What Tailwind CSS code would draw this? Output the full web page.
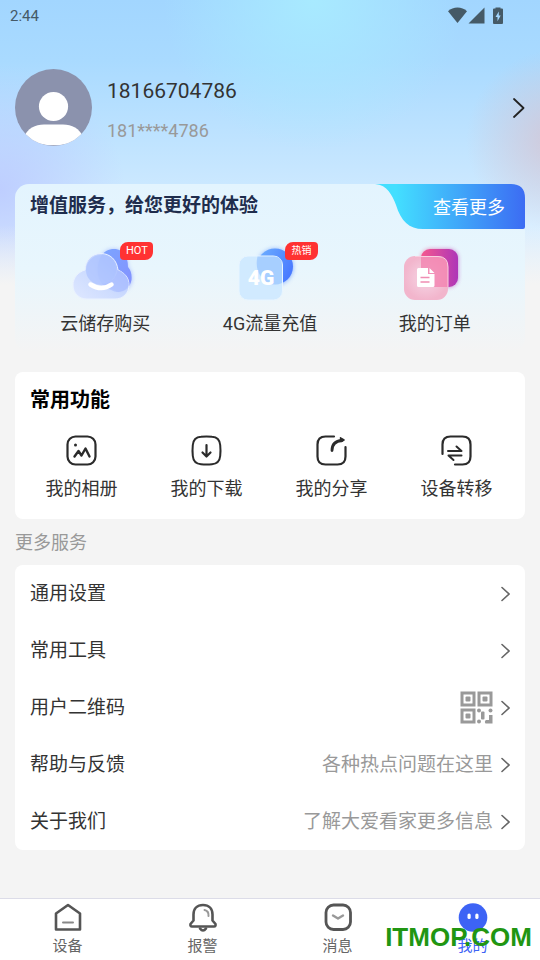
<!DOCTYPE html>
<html lang="zh-CN">
<head>
<meta charset="utf-8">
<meta name="viewport" content="width=device-width, initial-scale=1">
<title>我的</title>
<script src="https://cdn.jsdelivr.net/npm/@tailwindcss/browser@4"></script>
</head>
<body class="bg-[#f4f4f4] font-[Roboto,'Noto_Sans_CJK_SC',sans-serif] text-[#333333]">
<div class="relative isolate flex min-h-screen flex-col">
  <div class="absolute inset-x-0 top-0 -z-10 h-[290px] bg-[linear-gradient(180deg,#f4f4f400_0px,#f4f4f400_225px,#f4f4f4_285px),radial-gradient(circle_at_58%_0px,#a8eaff_0px,#a8eaff00_150px),radial-gradient(circle_at_103%_140px,#d6c2d0cc_0px,#d6c2d000_90px),radial-gradient(circle_at_0%_190px,#bccaffdd_0px,#bccaff00_125px),linear-gradient(180deg,#a2d6ff_0px,#a9daff_60px,#cbe8ff_185px,#d9eeff_225px,#e2f1fd_290px)]"></div>

  <!-- Status bar -->
  <div class="flex h-8 items-center justify-between pr-[35px] pl-[10px] text-[#455a67]">
    <span class="text-[15px]">2:44</span>
    <svg class="h-[18px] w-[58px]" viewBox="0 0 58 18" fill="currentColor" aria-hidden="true">
      <path d="M1 4.200C3.600 1.800 7 .600 10.500 .600S17.400 1.800 20 4.200L10.500 16Z"/>
      <path d="M21.500 16.500 37.500 .600V16.500Z"/>
      <path fill-rule="evenodd" d="M48.500 1.500V.500h5v1H55q1 0 1 1V16q0 1-1 1h-8q-1 0-1-1V2.500q0-1 1-1ZM51.800 4.500 48.500 10h2v4.200L53.700 8.600H51.800Z"/>
    </svg>
  </div>

  <!-- Profile -->
  <header class="mt-[37px] px-[15px]">
    <a href="#profile" class="flex items-center">
      <svg class="size-[77px] shrink-0" viewBox="0 0 77 77" role="img" aria-label="头像">
        <defs><clipPath id="av"><circle cx="38.500" cy="38.500" r="38.500"/></clipPath></defs>
        <circle cx="38.500" cy="38.500" r="38.500" fill="#8b92ad"/>
        <g clip-path="url(#av)" fill="#fff"><circle cx="38.500" cy="37.500" r="14.600"/><path d="M8 69C13 59 20 55.500 29 55.500H48C57 55.500 64 59 69 69C60 74 50 76.300 38.500 76.300S17 74 8 69Z"/></g>
      </svg>
      <div class="ml-[15px] flex flex-1 flex-col gap-[14px] pt-1">
        <span class="text-[21px] leading-7">18166704786</span>
        <span class="text-[18px] leading-6 text-[#999999]">181****4786</span>
      </div>
      <svg class="h-5 w-3" viewBox="0 0 12 20" fill="none" stroke="#222" stroke-width="1.800" stroke-linecap="round" stroke-linejoin="round" aria-hidden="true"><path d="M1 1 10.500 10 1 19"/></svg>
    </a>
  </header>

  <main class="px-[15px]">
    <!-- Value-added services -->
    <section class="mt-[38px] h-[168px] rounded-[14px] bg-linear-to-b from-[#e3f4fe] via-[#e8f6fd] to-[#f4f4f4]">
      <div class="flex items-start justify-between">
        <h2 class="pt-[8px] pl-[15px] text-[19px] leading-7 font-bold text-[#1f2d4d]">增值服务，给您更好的体验</h2>
        <a href="#more" class="relative isolate flex h-[45px] w-[150px] items-center justify-end pt-[2px] pr-5 text-[18px] text-white">
          <svg class="absolute inset-0 -z-10 size-full" viewBox="0 0 150 45" aria-hidden="true">
            <defs><linearGradient id="mg"><stop offset=".15" stop-color="#43dfff"/><stop offset="1" stop-color="#3c6cf3"/></linearGradient></defs>
            <path fill="url(#mg)" d="M-2 0C12 0 17 11 21 21C26 37 34 45 48 45H148Q150 45 150 43V14Q150 0 136 0Z"/>
          </svg>查看更多</a>
      </div>
      <div class="mt-[13px] grid grid-cols-3 px-[8px] text-[18px] leading-6">
        <a href="#cloud" class="flex flex-col items-center gap-[10px]">
          <span class="relative">
            <svg class="h-[60px] w-[90px]" viewBox="0 0 90 60" aria-hidden="true">
              <defs>
                <linearGradient id="c1" x1="0" y1="0" x2="1" y2="1"><stop stop-color="#7ba6ff"/><stop offset="1" stop-color="#8490ff"/></linearGradient>
                <linearGradient id="c2" x1="1" y1="0" x2="0" y2="1"><stop stop-color="#adc4ff" stop-opacity=".75"/><stop offset="1" stop-color="#dfe8ff"/></linearGradient>
                <filter id="b1" x="-30%" y="-30%" width="160%" height="160%"><feGaussianBlur stdDeviation="2"/></filter>
              </defs>
              <path d="M42 42C36 34 37 23 40 16C43 10 48 7 54 7C62 7 68 13 68 25C71 28 72.500 33 72 38C71 45 66 50 58 50Z" fill="#7f98ff" opacity=".55" filter="url(#b1)"/>
              <path d="M42 42C36 34 37 23 40 16C43 10 48 7 54 7C62 7 68 13 68 25C71 28 72 33 71.500 38C70 45 66 50 58 50Z" fill="url(#c1)"/>
              <path d="M27 57C19 57 13 51 13 43C13 36 18 30 25 28C25 18 32 11.500 41 11.500C50 11.500 57 18 58 28C65 31 69 36 69 43C69 51 63 57 55 57Z" fill="url(#c2)" stroke="#eaf2ff" stroke-width="1"/>
              <circle cx="41" cy="28" r="15" fill="#a9c0ff" opacity=".65"/>
              <path d="M58 28C65 31 69 36 69 43C66 48 62 50 57 50C50 49 45 44 42 42C50 42 56 36 58 28Z" fill="#a9bcff" opacity=".6"/>
              <path d="M30.500 42.500Q41.500 49.500 51.500 42.500" fill="none" stroke="#fff" stroke-width="4.500" stroke-linecap="round"/>
            </svg>
            <span class="absolute top-0 left-[60px] flex h-[18px] w-[33px] items-center justify-center rounded-[8px_4px_8px_4px] bg-[#ff3232] text-[11px] text-white">HOT</span>
          </span>
          云储存购买
        </a>
        <a href="#traffic" class="flex flex-col items-center gap-[10px]">
          <span class="relative">
            <svg class="h-[60px] w-[90px]" viewBox="0 0 90 60" aria-hidden="true">
              <defs><linearGradient id="g1" x1="0" y1="0" x2="1" y2=".5"><stop stop-color="#6fb2ff"/><stop offset="1" stop-color="#4a7bff"/></linearGradient></defs>
              <circle cx="50" cy="25" r="18.500" fill="#5c90ff" opacity=".6" filter="url(#b1)"/>
              <circle cx="50" cy="24.500" r="18" fill="url(#g1)"/>
              <rect x="14" y="14" width="43.500" height="44" rx="9" fill="#cfe9ff" fill-opacity=".96" stroke="#e8f5ff"/>
              <path d="M32.500 14.500H49Q57 14.500 57 23V41Q48 45 40 39Q29 29 32.500 14.500Z" fill="#8fc0ff" opacity=".6"/>
              <text x="36" y="43" text-anchor="middle" font-family="Roboto" font-size="21" font-weight="900" fill="#fff">4G</text>
            </svg>
            <span class="absolute top-0 left-[60px] flex h-[18px] w-[33px] items-center justify-center rounded-[8px_4px_8px_4px] bg-[#ff3232] text-[10px] text-white">热销</span>
          </span>
          4G流量充值
        </a>
        <a href="#orders" class="flex flex-col items-center gap-[10px]">
          <svg class="h-[60px] w-[90px]" viewBox="0 0 90 60" aria-hidden="true">
            <defs><linearGradient id="o1"><stop stop-color="#f5588e"/><stop offset="1" stop-color="#ae35b8"/></linearGradient>
            <radialGradient id="o2"><stop offset=".5" stop-color="#f4c6d9"/><stop offset="1" stop-color="#f2b5cc"/></radialGradient></defs>
            <rect x="31" y="7" width="37" height="38" rx="9" fill="url(#o1)" opacity=".65" filter="url(#b1)"/>
            <rect x="31" y="7" width="37" height="38" rx="9" fill="url(#o1)"/>
            <rect x="14" y="14" width="44" height="44" rx="11" fill="url(#o2)"/>
            <path d="M31 14.500H48Q58 14.500 58 25V45H40Q31 45 31 36Z" fill="#f37fad" opacity=".75"/>
            <path d="M25 14.500H48Q58 14.500 58 25V45" fill="none" stroke="#f9cfe0"/>
            <path d="M28.500 26H38V32H44.500V43.500Q44.500 45 43 45H28.500Q27 45 27 43.500V27.500Q27 26 28.500 26ZM39.500 26 44.500 31H39.500Z" fill="#fff"/>
            <path d="M30.500 35.500H39.500M30.500 40H39.500" stroke="#ef8db3" stroke-width="1.500"/>
          </svg>
          我的订单
        </a>
      </div>
    </section>

    <!-- Common functions -->
    <section class="mt-5 rounded-[8px] bg-white pb-4">
      <h2 class="pt-[13px] pl-[15px] text-[20px] leading-[30px] font-bold text-black">常用功能</h2>
      <div class="mt-5 grid grid-cols-4 pr-[6px] pl-1 text-[18px] leading-7">
        <a href="#album" class="flex flex-col items-center gap-[9px]">
          <svg class="size-[31px]" viewBox="0 0 31 31" fill="none" stroke="#2b2b2b" stroke-width="2.200" stroke-linecap="round" stroke-linejoin="round" aria-hidden="true"><rect x="1.500" y="1.500" width="28" height="28" rx="8"/><path d="M8.500 21.500 12.500 16 15.500 20.500 19.500 13.500 23.500 21.500" stroke-width="2.400"/><circle cx="9.500" cy="10" r="1.500" fill="#2b2b2b" stroke="none"/></svg>
          我的相册
        </a>
        <a href="#downloads" class="flex flex-col items-center gap-[9px]">
          <svg class="size-[31px]" viewBox="0 0 31 31" fill="none" stroke="#2b2b2b" stroke-width="2" stroke-linecap="round" stroke-linejoin="round" aria-hidden="true"><path d="M10 1.800Q15.500 1.200 21 1.800 28.500 2.300 29.200 10 29.800 15.500 29.200 21 28.500 28.700 21 29.200 15.500 29.800 10 29.200 2.500 28.700 1.800 21 1.200 15.500 1.800 10 2.500 2.300 10 1.800Z"/><path d="M15.500 10V21M11.500 17.500 15.500 21.500 19.500 17.500" stroke-width="2.200"/></svg>
          我的下载
        </a>
        <a href="#share" class="flex flex-col items-center gap-[9px]">
          <svg class="size-[31px]" viewBox="0 0 31 31" fill="none" stroke="#2b2b2b" stroke-width="2.200" stroke-linecap="round" stroke-linejoin="round" aria-hidden="true"><path d="M18 1.500H9.500Q1.500 1.500 1.500 9.500V21.500Q1.500 29.500 9.500 29.500H21.500Q29.500 29.500 29.500 21.500V12"/><path d="M16 15.500C16 9.500 19.500 6 26 5.500" stroke-width="2.800"/><path d="M24.500 2.800 28 5 25 6.500Z" fill="#2b2b2b" stroke-width="1.500"/></svg>
          我的分享
        </a>
        <a href="#transfer" class="flex flex-col items-center gap-[9px]">
          <svg class="size-[31px]" viewBox="0 0 31 31" fill="none" stroke="#2b2b2b" stroke-width="2.200" stroke-linecap="round" stroke-linejoin="round" aria-hidden="true"><path d="M1.500 19V9.500Q1.500 1.500 9.500 1.500H21.500Q29.500 1.500 29.500 9.500V21.500Q29.500 29.500 21.500 29.500H14"/><path d="M7 16H20.500L15.500 11.500M20.500 20.500H7.500L12.500 25" stroke-width="2"/></svg>
          设备转移
        </a>
      </div>
    </section>

    <!-- More services -->
    <h2 class="mt-[10px] text-[18px] leading-7 text-[#999999]">更多服务</h2>
    <nav aria-label="更多服务" class="mt-[8px] rounded-[8px] bg-white px-[15px] text-[19px] leading-7">
      <a href="#settings" class="flex h-[57px] items-center justify-between">通用设置
        <svg class="h-4 w-[10px]" viewBox="0 0 10 16" fill="none" stroke="#666" stroke-width="1.600" stroke-linecap="round" aria-hidden="true"><path d="M2 1.500 9 8 2 14.500"/></svg></a>
      <a href="#tools" class="flex h-[57px] items-center justify-between">常用工具
        <svg class="h-4 w-[10px]" viewBox="0 0 10 16" fill="none" stroke="#666" stroke-width="1.600" stroke-linecap="round" aria-hidden="true"><path d="M2 1.500 9 8 2 14.500"/></svg></a>
      <a href="#qr" class="flex h-[57px] items-center justify-between">用户二维码
        <span class="flex items-center gap-[7px]">
          <svg class="size-[33px]" viewBox="0 0 33 33" fill="#999" aria-hidden="true">
            <g fill="none" stroke="#999" stroke-width="3"><rect x="2" y="2" width="12" height="12"/><rect x="19" y="2" width="12" height="12"/><rect x="2" y="19" width="12" height="12"/></g>
            <rect x="5.500" y="5.500" width="5" height="5" rx="1"/><rect x="22.500" y="5.500" width="5" height="5" rx="1"/><rect x="5.500" y="22.500" width="5" height="5" rx="1"/>
            <circle cx="19" cy="19.500" r="2"/><circle cx="30.500" cy="19.500" r="2"/><circle cx="19" cy="30.500" r="2"/><rect x="21" y="20.500" width="3.500" height="8" rx="1"/><path d="M29 24H32.500V32.500H25.500Q24 30.500 26 29H29Z"/>
          </svg>
          <svg class="h-4 w-[10px]" viewBox="0 0 10 16" fill="none" stroke="#666" stroke-width="1.600" stroke-linecap="round" aria-hidden="true"><path d="M2 1.500 9 8 2 14.500"/></svg>
        </span></a>
      <a href="#help" class="flex h-[57px] items-center justify-between">帮助与反馈
        <span class="flex items-center gap-[7px] text-[#999999]">各种热点问题在这里
          <svg class="h-4 w-[10px]" viewBox="0 0 10 16" fill="none" stroke="#666" stroke-width="1.600" stroke-linecap="round" aria-hidden="true"><path d="M2 1.500 9 8 2 14.500"/></svg></span></a>
      <a href="#about" class="flex h-[57px] items-center justify-between">关于我们
        <span class="flex items-center gap-[7px] text-[#999999]">了解大爱看家更多信息
          <svg class="h-4 w-[10px]" viewBox="0 0 10 16" fill="none" stroke="#666" stroke-width="1.600" stroke-linecap="round" aria-hidden="true"><path d="M2 1.500 9 8 2 14.500"/></svg></span></a>
    </nav>
  </main>

  <!-- Tab bar -->
  <footer class="relative mt-auto">
    <nav aria-label="主导航" class="grid h-[62px] grid-cols-4 border-t border-[#dcdce8] bg-white pt-[4px] text-[15px] leading-[22px] text-[#666666]">
      <a href="#devices" class="flex flex-col items-center gap-[2px]">
        <svg class="size-[30px]" viewBox="0 0 30 30" fill="none" stroke="#555" stroke-width="2.600" stroke-linejoin="round" stroke-linecap="round" aria-hidden="true"><path d="M3 10.500 15 2 27 10.500V26.500H3Z"/><path d="M10 19.500H20" stroke="#888" stroke-width="2"/></svg>设备</a>
      <a href="#alerts" class="flex flex-col items-center gap-[2px]">
        <svg class="size-[30px]" viewBox="0 0 30 30" fill="none" stroke="#555" stroke-width="2.600" stroke-linejoin="round" stroke-linecap="round" aria-hidden="true"><path d="M15 2C9 2 5.500 6 5.500 11.500V17.500L2.500 21Q2 23.500 4 23.500H26Q28 23.500 27.500 21L24.500 17.500V11.500C24.500 6 21 2 15 2Z"/><path d="M12 25.500Q15 29.500 18 25.500"/><path d="M16.500 7Q21 8 20.500 13" stroke="#999" stroke-width="2"/></svg>报警</a>
      <a href="#messages" class="flex flex-col items-center gap-[2px]">
        <svg class="size-[30px]" viewBox="0 0 30 30" fill="none" stroke="#555" stroke-width="2.800" stroke-linejoin="round" stroke-linecap="round" aria-hidden="true"><rect x="3" y="2" width="24.500" height="24.500" rx="7.500"/><path d="M10 12.500 15 15.500 20 12.500" stroke="#999" stroke-width="2.400"/></svg>消息</a>
      <a href="#me" aria-current="page" class="flex flex-col items-center gap-[2px] text-[#3d63f5]">
        <svg class="size-[30px]" viewBox="0 0 30 30" aria-hidden="true"><circle cx="15" cy="14.500" r="14.300" fill="#3d63f5"/><rect x="9.500" y="10.500" width="3.200" height="5.500" rx="1.600" fill="#fff"/><rect x="17.300" y="10.500" width="3.200" height="5.500" rx="1.600" fill="#fff"/></svg>我的</a>
    </nav>
    <span class="pointer-events-none absolute right-[8px] bottom-[5px] font-['Liberation_Sans',sans-serif] text-[26px] leading-9 font-bold text-[#219612]">ITMOP.COM</span>
  </footer>
</div>
</body>
</html>
